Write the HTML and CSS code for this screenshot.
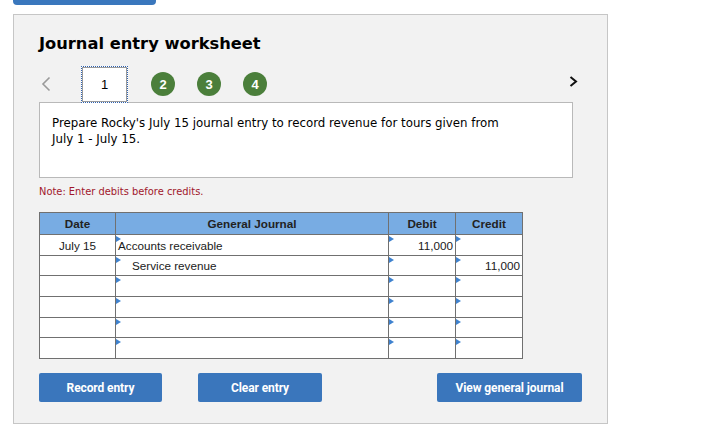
FILE: index.html
```html
<!DOCTYPE html>
<html lang="en">
<head>
<meta charset="utf-8">
<title>Journal entry worksheet</title>
<link rel="stylesheet" href="styles.css">
</head>
<body>
<div class="top-tab"></div>
<div class="panel">
  <h1 class="title">Journal entry worksheet</h1>
  <div class="nav">
    <svg class="chev chev-left" width="10" height="16" viewBox="0 0 10 16"><path d="M8.5 1.5 L2 8 L8.5 14.5" fill="none" stroke="#9a9a9a" stroke-width="1.6"/></svg>
    <div class="step step-current">1</div>
    <div class="step step-done">2</div>
    <div class="step step-done">3</div>
    <div class="step step-done">4</div>
    <svg class="chev chev-right" width="9" height="11" viewBox="0 0 9 11"><path d="M1.5 1 L7 5.5 L1.5 10" fill="none" stroke="#111" stroke-width="2"/></svg>
  </div>
  <div class="desc">Prepare Rocky's July 15 journal entry to record revenue for tours given from<br>July 1 - July 15.</div>
  <p class="note">Note: Enter debits before credits.</p>
  <table class="journal">
    <thead>
      <tr><th class="c-date">Date</th><th class="c-gj">General Journal</th><th class="c-dr">Debit</th><th class="c-cr">Credit</th></tr>
    </thead>
    <tbody>
      <tr><td class="c-date">July 15</td><td class="c-gj mark">Accounts receivable</td><td class="c-dr mark num">11,000</td><td class="c-cr mark num"></td></tr>
      <tr><td class="c-date"></td><td class="c-gj mark indent">Service revenue</td><td class="c-dr mark num"></td><td class="c-cr mark num">11,000</td></tr>
      <tr><td class="c-date"></td><td class="c-gj mark"></td><td class="c-dr mark"></td><td class="c-cr mark"></td></tr>
      <tr><td class="c-date"></td><td class="c-gj mark"></td><td class="c-dr mark"></td><td class="c-cr mark"></td></tr>
      <tr><td class="c-date"></td><td class="c-gj mark"></td><td class="c-dr mark"></td><td class="c-cr mark"></td></tr>
      <tr><td class="c-date"></td><td class="c-gj mark"></td><td class="c-dr mark"></td><td class="c-cr mark"></td></tr>
    </tbody>
  </table>
  <div class="actions">
    <button class="btn btn-record">Record entry</button>
    <button class="btn btn-clear">Clear entry</button>
    <button class="btn btn-view">View general journal</button>
  </div>
</div>
</body>
</html>
```
FILE: styles.css
```css
* { box-sizing: border-box; }
html, body { margin: 0; padding: 0; background: #fff; }
body { font-family: "DejaVu Sans", Verdana, sans-serif; color: #000; }

.top-tab {
  margin-left: 13px;
  width: 143px;
  height: 5px;
  background: #3a77bd;
  border-radius: 0 0 4px 4px;
}

.panel {
  margin: 9px 0 0 13px;
  width: 595px;
  height: 410px;
  background: #f2f2f2;
  border: 1px solid #c6c6c6;
  padding: 0 0 0 25px;
}

.title {
  margin: 18px 0 0 0;
  font-size: 16.3px;
  line-height: 22px;
  font-weight: bold;
}

.nav {
  display: flex;
  align-items: center;
  height: 36px;
  margin-top: 11px;
  width: 540px;
}
.chev-left { margin-left: 2px; }
.step {
  display: flex;
  align-items: center;
  justify-content: center;
  font-family: "Liberation Sans", Arial, sans-serif;
}
.step-current {
  position: relative;
  z-index: 1;
  margin-left: 30px;
  align-self: flex-start;
  width: 47px;
  height: 37px;
  background: #fff;
  border: 1px dotted #2f62b0;
  box-shadow: inset 0 0 0 1px #9a9a9a;
  font-size: 13px;
  color: #000;
}
.step-done {
  width: 24px;
  height: 24px;
  border-radius: 50%;
  background: #4b7f3b;
  color: #fff;
  font-weight: bold;
  font-size: 13px;
  margin-left: 22px;
}
.step-current + .step-done { margin-left: 23px; }
.chev-right { margin-left: auto; margin-right: 1px; margin-top: -6px; }

.desc {
  width: 534px;
  height: 76px;
  background: #fff;
  border: 1px solid #b9b9b9;
  padding: 12px 12px 0 12px;
  font-size: 11.8px;
  line-height: 16px;
}

.note {
  margin: 7px 0 0 0;
  font-size: 9.9px;
  line-height: 14px;
  color: #a1172b;
}

.journal {
  margin-top: 13px;
  border-collapse: collapse;
  font-family: "Liberation Sans", Arial, sans-serif;
  font-size: 11.7px;
  color: #1a1a1a;
  table-layout: fixed;
  width: 484px;
}
.journal th, .journal td {
  border: 1px solid #707070;
  padding: 0;
}
.journal th {
  background: #78ace3;
  height: 22px;
  font-weight: bold;
  color: #222;
  text-align: center;
}
.journal td {
  background: #fff;
  height: 21px;
  vertical-align: middle;
}
.journal tbody tr:nth-child(2) td,
.journal tbody tr:nth-child(5) td { height: 20px; }
.c-date { width: 76px; text-align: center; }
.c-gj { width: 273px; }
.c-dr { width: 67px; }
.c-cr { width: 67px; }
td.c-gj { padding-left: 2px; }
td.indent { padding-left: 16px; }
td.num { text-align: right; padding-right: 2px; }
td.mark {
  background: #fff;
  position: relative;
}
td.mark::before {
  content: "";
  position: absolute;
  left: 0;
  top: 1px;
  border-left: 5px solid #3f82cf;
  border-top: 3px solid transparent;
  border-bottom: 3px solid transparent;
}

.actions {
  display: flex;
  margin-top: 14px;
  width: 543px;
}
.btn {
  height: 29px;
  border: none;
  border-radius: 2px;
  background: #3a76bc;
  color: #fff;
  font-family: Roboto, "Liberation Sans", sans-serif;
  font-weight: bold;
  font-size: 12px;
  letter-spacing: -0.1px;
  padding: 0;
}
.btn-record { width: 123px; }
.btn-clear { width: 124px; margin-left: 36px; }
.btn-view { width: 145px; margin-left: auto; }
```
